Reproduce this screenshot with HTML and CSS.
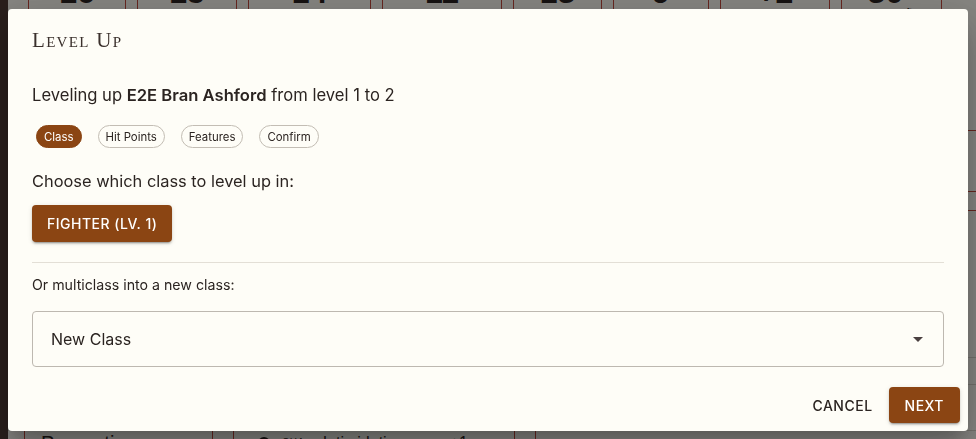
FILE: index.html
```html
<!DOCTYPE html>
<html lang="en">
<head>
<meta charset="utf-8">
<title>Level Up</title>
<link rel="stylesheet" href="styles.css">
</head>
<body>
<div class="page">
  <aside class="rail"></aside>
  <main class="sheet">
    <div class="stats">
      <div class="stat w1"><span>16</span></div>
      <div class="stat w2"><span>15</span></div>
      <div class="stat w3"><span>14</span></div>
      <div class="stat w4"><span>11</span></div>
      <div class="stat w5"><span>13</span></div>
      <div class="stat w6"><span>9</span></div>
      <div class="stat w7"><span>+2</span></div>
      <div class="stat w8"><span>30</span><small>ft.</small></div>
    </div>
    <div class="bands">
      <div class="band b1"></div>
      <div class="band b2"></div>
      <div class="band b3"></div>
      <div class="band b4"></div>
      <div class="band b5"></div>
    </div>
    <div class="skills">
      <div class="skill-cell first"><span class="skill-name">Perception</span></div>
      <div class="skill-cell second">
        <span class="dot"></span>
        <span class="abbr">CHA</span>
        <span class="skill-name">Intimidation</span>
        <span class="mod">+1</span>
      </div>
      <div class="skill-cell third"></div>
    </div>
  </main>
</div>
<div class="scrim"></div>

<section class="dialog" role="dialog" aria-labelledby="dlg-title">
  <h2 class="dialog-title" id="dlg-title">Level Up</h2>
  <div class="dialog-content">
    <p class="intro">Leveling up <strong>E2E Bran Ashford</strong> from level 1 to 2</p>
    <div class="steps">
      <span class="chip active">Class</span>
      <span class="chip">Hit Points</span>
      <span class="chip">Features</span>
      <span class="chip">Confirm</span>
    </div>
    <p class="prompt">Choose which class to level up in:</p>
    <button class="btn btn-filled class-btn" type="button">Fighter (Lv. 1)</button>
    <hr class="divider">
    <p class="sub">Or multiclass into a new class:</p>
    <div class="select">
      <span class="select-value">New Class</span>
      <svg class="select-icon" viewBox="0 0 24 24" width="24" height="24" aria-hidden="true"><path d="M7 10l5 5 5-5z"/></svg>
    </div>
  </div>
  <div class="dialog-actions">
    <button class="btn btn-text" type="button">Cancel</button>
    <button class="btn btn-filled" type="button">Next</button>
  </div>
</section>
</body>
</html>
```

FILE: styles.css
```css
* { box-sizing: border-box; }

html, body {
  margin: 0;
  height: 100%;
}

body {
  font-family: Inter, "Liberation Sans", sans-serif;
  background: #fdfbf4;
  overflow: hidden;
}

/* ---------- character sheet behind the dialog ---------- */
.page {
  display: flex;
  height: 100vh;
}

.rail {
  width: 8px;
  flex: none;
  background: #4f3b35;
}

.sheet {
  flex: 1;
  display: flex;
  flex-direction: column;
  overflow: hidden;
}

.stats {
  display: flex;
  gap: 11px;
  padding-left: 20px;
  margin-top: -40px;
  height: 70px;
  flex: none;
}

.stat {
  border-left: 1px solid #c44a3e;
  border-right: 1px solid #c44a3e;
  display: flex;
  align-items: flex-start;
  justify-content: center;
  padding-top: 16px;
  font-family: "Liberation Sans", sans-serif;
  font-weight: 700;
  font-size: 32px;
  line-height: 32px;
  color: #2a2220;
}
.stat small {
  font-size: 11px;
  line-height: 11px;
  font-weight: 400;
  margin-left: 3px;
  align-self: center;
  margin-top: 18px;
}
.w1 { width: 98px; }
.w2 { width: 100px; }
.w3 { width: 123px; }
.w4 { width: 120px; }
.w5 { width: 89px; }
.w6 { width: 96px; }
.w7 { width: 110px; }
.w8 { width: 101px; }

.bands {
  display: flex;
  flex-direction: column;
  flex: none;
}
.band { border-bottom: 1px solid #c44a3e; }
.b1 { height: 101px; }
.b2 { height: 61px; }
.b3 { height: 19px; }
.b4 { height: 147px; border-bottom-color: #d9d5cc; }
.b5 { height: 27px; border-bottom-color: #d9d5cc; }

.skills {
  display: flex;
  gap: 20px;
  padding-left: 16px;
  margin-top: 45px;
  height: 40px;
  border-top: 1px solid #d9d5cc;
  flex: none;
}

.skill-cell {
  border-left: 1px solid #c44a3e;
  border-right: 1px solid #c44a3e;
  display: flex;
  align-items: flex-start;
  font-family: "Liberation Sans", sans-serif;
  font-size: 20px;
  line-height: 24px;
  color: #2a2220;
}
.skill-cell.first { width: 189px; padding-left: 16px; }
.skill-cell.second { width: 282px; padding-left: 24px; gap: 12px; font-size: 16px; }
.skill-cell.third { flex: 1; border-right: 0; }

.dot {
  width: 12px;
  height: 12px;
  border-radius: 50%;
  background: #1e1a18;
  margin-top: 6px;
}
.abbr { font-size: 10px; letter-spacing: 0.5px; margin-right: 6px; }
.mod { margin-left: auto; margin-right: 46px; }

.scrim {
  position: fixed;
  inset: 0;
  background: rgba(0, 0, 0, 0.47);
}

/* ---------- dialog ---------- */
.dialog {
  position: fixed;
  left: 8px;
  top: 9px;
  width: 960px;
  height: 422px;
  background: #fefdf7;
  border-radius: 4px;
  box-shadow: 0 11px 15px -7px rgba(0,0,0,0.2), 0 24px 38px 3px rgba(0,0,0,0.14), 0 9px 46px 8px rgba(0,0,0,0.12);
  display: flex;
  flex-direction: column;
  color: #2b2421;
}

.dialog-title {
  margin: 0;
  padding: 16px 24px 0;
  height: 74px;
  font-family: "Liberation Serif", serif;
  font-variant: small-caps;
  font-weight: 400;
  font-size: 21px;
  line-height: 30px;
  letter-spacing: 1.3px;
  color: #3a302c;
}

.dialog-content {
  flex: 1;
  padding: 0 24px;
  display: flex;
  flex-direction: column;
  align-items: flex-start;
}

.intro {
  margin: 0;
  font-size: 16.6px;
  line-height: 24px;
}
.intro strong { font-weight: 600; }

.steps {
  display: flex;
  gap: 16px;
  margin: 18px 0 0 4px;
}

.chip {
  height: 23px;
  display: inline-flex;
  align-items: center;
  padding: 0 7px;
  border: 1px solid #c3bdb4;
  border-radius: 12px;
  font-size: 11.4px;
  color: #2b2421;
}
.chip.active {
  background: #8b4513;
  border-color: #8b4513;
  color: #fff;
}

.prompt {
  margin: 21px 0 0;
  font-size: 16.4px;
  line-height: 24px;
}

.btn {
  font-family: Inter, "Liberation Sans", sans-serif;
  font-weight: 500;
  font-size: 14px;
  letter-spacing: 0.5px;
  text-transform: uppercase;
  border: 0;
  border-radius: 4px;
  cursor: pointer;
}

.btn-filled {
  background: #8b4513;
  color: #fff;
  height: 36px;
  padding: 0 16px;
  box-shadow: 0 3px 1px -2px rgba(0,0,0,0.2), 0 2px 2px 0 rgba(0,0,0,0.14), 0 1px 5px 0 rgba(0,0,0,0.12);
}

.class-btn {
  margin-top: 12px;
  height: 37px;
  padding: 0 15px;
}

.btn-text {
  background: transparent;
  color: #2b2421;
  height: 36px;
  padding: 0 8px;
}

.divider {
  align-self: stretch;
  margin: 20px 0 0;
  border: 0;
  border-top: 1px solid #e3dfd6;
}

.sub {
  margin: 11px 0 0;
  font-size: 14.2px;
  line-height: 22px;
}

.select {
  align-self: stretch;
  margin-top: 15px;
  height: 56px;
  border: 1px solid #bdb8b0;
  border-radius: 4px;
  display: flex;
  align-items: center;
  justify-content: space-between;
  padding: 0 13px 0 18px;
  font-size: 16px;
  color: #2b2421;
}

.select-icon { fill: #4a4040; }

.dialog-actions {
  display: flex;
  justify-content: flex-end;
  align-items: center;
  gap: 8px;
  padding: 8px;
}
```
